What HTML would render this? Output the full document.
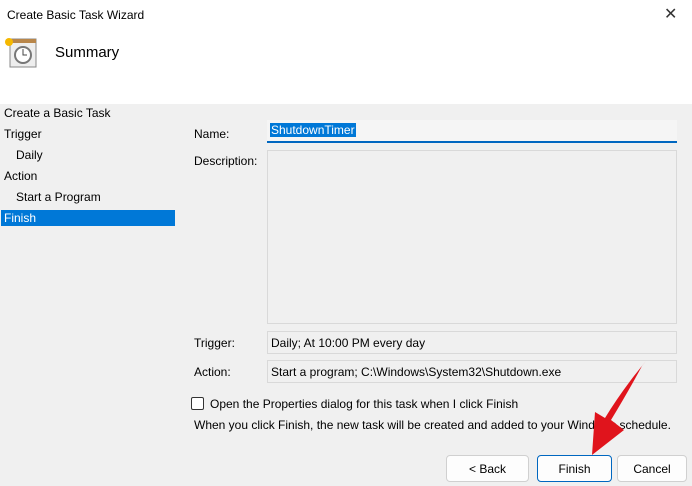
<!DOCTYPE html><html><head><style>
body{margin:0;width:692px;height:486px;overflow:hidden;background:#f0f0f0;font-family:"Liberation Sans",sans-serif;font-size:12px;color:#000;position:relative}
div{position:absolute;box-sizing:border-box}
.t{white-space:nowrap}
.f{background:#f0f0f0;border:1px solid #d9d9d9;left:267px;width:410px}
.b{background:#fdfdfd;border:1px solid #d0d0d0;border-radius:4px;text-align:center;line-height:27px;height:27px;top:455px}
</style></head><body>
<div style="left:0;top:0;width:692px;height:104px;background:#fff"></div>
<div class="t" style="left:7px;top:8px">Create Basic Task Wizard</div>
<div class="t" style="left:664px;top:4px;font-size:16px;color:#333">✕</div>
<svg style="position:absolute;left:3px;top:36px" width="34" height="32"><rect x="7" y="3" width="26" height="28" fill="#eee" stroke="#888"/><rect x="7" y="3" width="26" height="4" fill="#b8864a"/><circle cx="20" cy="19" r="8" fill="#fff" stroke="#777" stroke-width="2"/><path d="M20 13v6h4" stroke="#444" fill="none"/><circle cx="6" cy="6" r="4" fill="#f5b800"/></svg>
<div class="t" style="left:55px;top:44px;font-size:15px">Summary</div>
<div class="t" style="left:4px;top:106px">Create a Basic Task</div>
<div class="t" style="left:4px;top:127px">Trigger</div>
<div class="t" style="left:16px;top:148px">Daily</div>
<div class="t" style="left:4px;top:169px">Action</div>
<div class="t" style="left:16px;top:190px">Start a Program</div>
<div class="t" style="left:1px;top:210px;width:174px;height:16px;background:#0078d7;color:#fff;padding:1px 3px">Finish</div>
<div class="t" style="left:194px;top:127px">Name:</div>
<div style="left:267px;top:120px;width:410px;height:23px;background:#f5f5f5;border-bottom:2px solid #0067c0"></div>
<div class="t" style="left:270px;top:123px;background:#0078d7;color:#fff;padding:0 1px">ShutdownTimer</div>
<div class="t" style="left:194px;top:154px">Description:</div>
<div class="f" style="top:150px;height:174px"></div>
<div class="t" style="left:194px;top:336px">Trigger:</div>
<div class="f" style="top:331px;height:23px;padding:4px 3px" >Daily; At 10:00 PM every day</div>
<div class="t" style="left:194px;top:365px">Action:</div>
<div class="f" style="top:360px;height:23px;padding:4px 3px">Start a program; C:\Windows\System32\Shutdown.exe</div>
<div style="left:191px;top:397px;width:13px;height:13px;border:1px solid #333;border-radius:2px;background:#fff"></div>
<div class="t" style="left:210px;top:397px">Open the Properties dialog for this task when I click Finish</div>
<div class="t" style="left:194px;top:418px">When you click Finish, the new task will be created and added to your Windows schedule.</div>
<div class="b" style="left:446px;width:83px">&lt; Back</div>
<div class="b" style="left:537px;width:75px;border-color:#0067c0">Finish</div>
<div class="b" style="left:617px;width:70px">Cancel</div>
<svg style="position:absolute;left:0;top:0" width="692" height="486"><path d="M646 361 L642 366 Q628 392 611 420 L624 430 L592 455 L595 412 L605 418 Q622 390 646 361 Z" fill="#e0141c"/></svg>
</body></html>
